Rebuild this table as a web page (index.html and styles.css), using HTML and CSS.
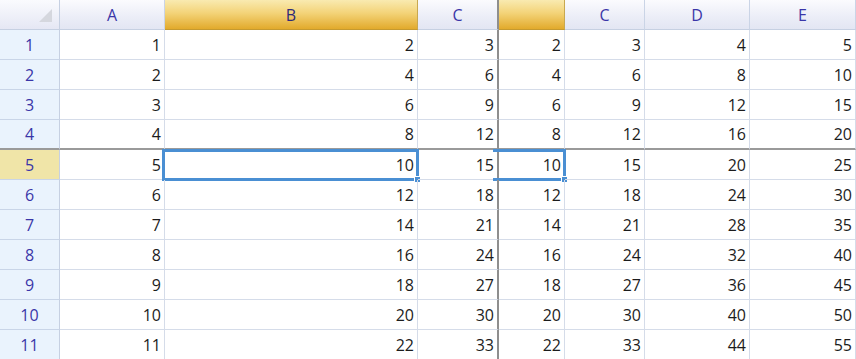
FILE: index.html
```html
<!DOCTYPE html>
<html>
<head>
<meta charset="utf-8">
<link rel="stylesheet" href="styles.css">
</head>
<body>
<div class="sheet">
  <div class="corner"><span class="tri"></span></div>
  <div class="ch">A</div>
  <div class="ch sel">B</div>
  <div class="ch split-v">C</div>
  <div class="ch sel"></div>
  <div class="ch">C</div>
  <div class="ch">D</div>
  <div class="ch">E</div>
</div>
<div class="sheet body" id="body"></div>
<script src="app.js"></script>
</body>
</html>
```
FILE: app.js
```js
var body = document.getElementById('body');
var html = '';
for (var r = 1; r <= 11; r++) {
  var rowCls = r === 4 ? ' split-h' : '';
  var vals = [r, 2*r, 3*r, 2*r, 3*r, 4*r, 5*r];
  html += '<div class="rh' + rowCls + (r === 5 ? ' selrow' : '') + '">' + r + '</div>';
  for (var c = 0; c < 7; c++) {
    var cls = 'cell' + rowCls;
    if (c === 2) cls += ' split-v';
    var inner = vals[c];
    if (r === 5 && c === 1) inner = '<span class="selbox"></span><span class="handle"></span>' + inner;
    if (r === 5 && c === 3) inner = '<span class="selbox cut"></span><span class="handle"></span>' + inner;
    html += '<div class="' + cls + '">' + inner + '</div>';
  }
}
body.innerHTML = html;
```
FILE: styles.css
```css
html, body {
  margin: 0;
  padding: 0;
  background: #fff;
}
.sheet {
  display: grid;
  grid-template-columns: 60px 105px 253px 81px 66px 80px 105px 106px;
  grid-auto-rows: 30px;
  font-family: "Open Sans", "Noto Sans", sans-serif;
  font-size: 16px;
}
.sheet > div {
  box-sizing: border-box;
  border-right: 1px solid #d5dce9;
  border-bottom: 1px solid #d5dce9;
  display: flex;
  align-items: center;
}
.corner {
  position: relative;
  background: linear-gradient(#fafbfe, #e5e7f4);
  border-right-color: #c6d0e2 !important;
  border-bottom-color: #c6d0e2 !important;
}
.tri {
  position: absolute;
  right: 7px;
  bottom: 7px;
  width: 0;
  height: 0;
  border-left: 13px solid transparent;
  border-bottom: 13px solid #d5d7de;
}
.ch {
  justify-content: center;
  background: linear-gradient(#fbfbfe, #ebedf7 60%, #e3e6f3);
  color: #3a36a8;
  border-right-color: #cad4e6 !important;
  border-bottom-color: #c6d0e2 !important;
}
.ch.sel {
  background: linear-gradient(#f9eab0, #f3d378 45%, #e2aa2c);
  color: #2e2a7a;
  border-right-color: #c8a850 !important;
  border-bottom-color: #c59a30 !important;
}
.rh {
  justify-content: center;
  background: #eaf3fd;
  color: #3a36a8;
  border-right-color: #c6d0e2 !important;
  border-bottom-color: #c9d5e8 !important;
}
.rh.selrow {
  background: #f0e5a8;
}
.cell {
  justify-content: flex-end;
  padding-right: 3px;
  color: #1c1c1c;
  position: relative;
}
.split-v {
  border-right: 2px solid #8e8e8e !important;
}
.split-h {
  border-bottom: 2px solid #9a9a9a !important;
}
.selbox {
  position: absolute;
  left: -3px;
  top: -1px;
  right: -2px;
  bottom: -2px;
  border: 3px solid #4a8fd3;
  pointer-events: none;
}
.selbox.cut {
  left: -6px;
  border-left: none;
}
.handle {
  position: absolute;
  right: -4px;
  bottom: -4px;
  width: 5px;
  height: 5px;
  background: #4a8fd3;
  border: 1px solid #fff;
}
```
